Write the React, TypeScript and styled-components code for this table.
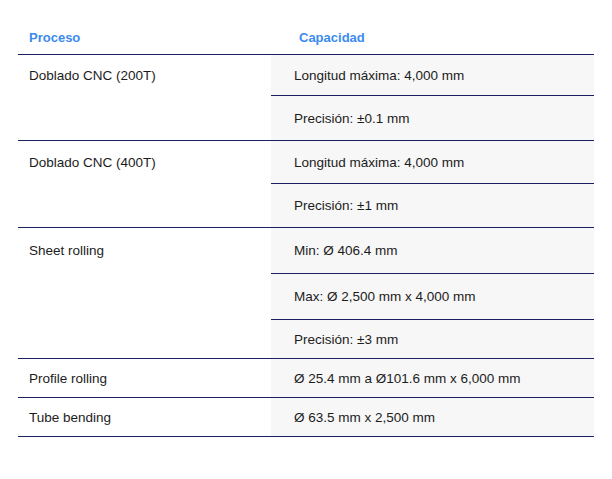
import React from 'react';
import styled, { createGlobalStyle } from 'styled-components';

const GlobalStyle = createGlobalStyle`
  html, body {
    margin: 0;
    padding: 0;
    background: #ffffff;
  }
  body {
    font-family: "Liberation Sans", Arial, Helvetica, sans-serif;
    color: #1c1c1c;
  }
`;

const line = '#1b1f5e';

const Page = styled.div`
  padding: 20px 18px;
`;

const Table = styled.div`
  width: 576px;
`;

const HeadRow = styled.div`
  display: grid;
  grid-template-columns: 253px 1fr;
  height: 34px;
  border-bottom: 1px solid ${line};
`;

const HeadCell = styled.div<{ $pad: number }>`
  display: flex;
  align-items: center;
  padding-left: ${(p) => p.$pad}px;
  font-size: 13px;
  font-weight: 700;
  color: #3b8bf0;
`;

const Group = styled.div`
  display: grid;
  grid-template-columns: 253px 1fr;
  border-bottom: 1px solid ${line};
`;

const ProcessCell = styled.div<{ $h: number }>`
  display: flex;
  align-items: center;
  height: ${(p) => p.$h}px;
  padding-left: 11px;
  font-size: 13.5px;
`;

const CapacityList = styled.div`
  display: flex;
  flex-direction: column;
  background: #f7f7f7;
`;

const CapacityItem = styled.div<{ $h: number }>`
  display: flex;
  align-items: center;
  height: ${(p) => p.$h}px;
  padding-left: 23px;
  font-size: 13.5px;
  & + & {
    border-top: 1px solid ${line};
  }
`;

type Cap = { text: string; h: number };
type Row = { process: string; caps: Cap[] };

const rows: Row[] = [
  {
    process: 'Doblado CNC (200T)',
    caps: [
      { text: 'Longitud máxima: 4,000 mm', h: 40 },
      { text: 'Precisión: ±0.1 mm', h: 44 },
    ],
  },
  {
    process: 'Doblado CNC (400T)',
    caps: [
      { text: 'Longitud máxima: 4,000 mm', h: 42 },
      { text: 'Precisión: ±1 mm', h: 43 },
    ],
  },
  {
    process: 'Sheet rolling',
    caps: [
      { text: 'Min: Ø 406.4 mm', h: 45 },
      { text: 'Max: Ø 2,500 mm x 4,000 mm', h: 45 },
      { text: 'Precisión: ±3 mm', h: 38 },
    ],
  },
  {
    process: 'Profile rolling',
    caps: [{ text: 'Ø 25.4 mm a Ø101.6 mm x 6,000 mm', h: 38 }],
  },
  {
    process: 'Tube bending',
    caps: [{ text: 'Ø 63.5 mm x 2,500 mm', h: 38 }],
  },
];

const App = () => {
  return (
    <>
      <GlobalStyle />
      <Page>
        <Table>
          <HeadRow>
            <HeadCell $pad={11}>Proceso</HeadCell>
            <HeadCell $pad={28}>Capacidad</HeadCell>
          </HeadRow>
          {rows.map((row) => (
            <Group key={row.process}>
              <ProcessCell $h={row.caps[0].h}>{row.process}</ProcessCell>
              <CapacityList>
                {row.caps.map((cap) => (
                  <CapacityItem key={cap.text} $h={cap.h}>
                    {cap.text}
                  </CapacityItem>
                ))}
              </CapacityList>
            </Group>
          ))}
        </Table>
      </Page>
    </>
  );
};

export default App;
